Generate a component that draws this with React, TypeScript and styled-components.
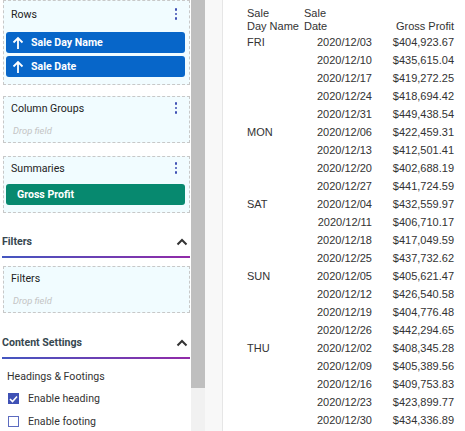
import styled, { createGlobalStyle } from "styled-components";

const GlobalStyle = createGlobalStyle`
  html, body {
    margin: 0;
    padding: 0;
    background: #ffffff;
  }
  * {
    box-sizing: border-box;
  }
`;

const Page = styled.div`
  display: flex;
  width: 465px;
  height: 431px;
  overflow: hidden;
`;

const Sidebar = styled.aside`
  width: 191px;
  flex-shrink: 0;
  overflow: hidden;
  background: #ffffff;
  font-family: Roboto, "Liberation Sans", sans-serif;
  font-size: 10.6px;
  color: #222;
`;

const SidebarInner = styled.div`
  padding: 0 1px 0 3px;
`;

const Scrollbar = styled.div`
  width: 14px;
  flex-shrink: 0;
  background: #f1f1f1;
`;

const Thumb = styled.div`
  height: 388px;
  background: #bfbfbf;
`;

const Gutter = styled.div`
  width: 18px;
  flex-shrink: 0;
  background: #f8f8f8;
  border-right: 1px solid #e6e6e6;
`;

const Report = styled.main`
  flex: 1;
  background: #ffffff;
  padding: 7px 0 0 24px;
  font-family: "Liberation Sans", Arial, sans-serif;
  font-size: 11px;
  color: #333;
`;

const Zone = styled.div<{ $gap?: number; $pb: number }>`
  background: #f1fcff;
  border: 1px dashed #c8c8c8;
  padding: 0 4px ${(p) => p.$pb}px 2px;
  margin-top: ${(p) => p.$gap ?? 0}px;
`;

const ZoneHead = styled.div<{ $h?: number }>`
  display: flex;
  align-items: center;
  justify-content: space-between;
  height: ${(p) => p.$h ?? 27}px;
  padding: 0 2px 5px 5px;
`;

const Kebab = styled.span`
  display: flex;
  flex-direction: column;
  gap: 2px;
  margin-right: 6px;
  i {
    width: 2.5px;
    height: 2.5px;
    border-radius: 50%;
    background: #3f51b5;
  }
`;

const DropField = styled.div`
  height: 14px;
  padding-left: 7px;
  font-size: 9.4px;
  font-style: italic;
  color: #c4c4c4;
  line-height: 14px;
`;

const Pills = styled.div`
  display: flex;
  flex-direction: column;
  gap: 3px;
`;

const Pill = styled.div<{ $tone: "blue" | "green" }>`
  display: flex;
  align-items: center;
  gap: 7px;
  height: 21px;
  border-radius: 3px;
  padding-left: ${(p) => (p.$tone === "green" ? 11 : 6)}px;
  background: ${(p) => (p.$tone === "green" ? "#07896f" : "#0766c9")};
  color: #ffffff;
  font-weight: 700;
`;

const SectionHead = styled.div<{ $top: number }>`
  display: flex;
  align-items: center;
  justify-content: space-between;
  margin: ${(p) => p.$top}px 0 0 -1px;
  padding: 0 2px 6px 0;
  line-height: 16px;
  font-weight: 700;
  color: #37474f;
  border-bottom: 2px solid;
  border-image: linear-gradient(90deg, #4356c0, #922aa8) 1;
`;

const Settings = styled.div`
  padding: 10px 0 0 4px;
  color: #333;
`;

const SettingsTitle = styled.div`
  line-height: 16px;
  margin-bottom: 2px;
`;

const CheckRow = styled.label`
  display: flex;
  align-items: center;
  gap: 9px;
  height: 23px;
  padding-left: 1px;
`;

const Box = styled.span<{ $on?: boolean }>`
  width: 11px;
  height: 11px;
  border: 1.5px solid ${(p) => (p.$on ? "#3f51b5" : "#5c6bc0")};
  background: ${(p) => (p.$on ? "#3f51b5" : "#ffffff")};
  display: flex;
  align-items: center;
  justify-content: center;
`;

const Table = styled.table`
  border-collapse: collapse;
  table-layout: fixed;
  width: 208px;
  th {
    font-weight: 400;
    text-align: left;
    vertical-align: bottom;
    line-height: 13px;
    padding: 0;
  }
  td {
    height: 18px;
    padding: 0;
    line-height: 18px;
    white-space: nowrap;
  }
`;

const Num = styled.td<{ $pad: number }>`
  text-align: right;
  padding-right: ${(p) => p.$pad}px !important;
`;

const HeadRight = styled.th`
  text-align: right !important;
  padding-right: 1px !important;
`;

const ArrowUp = () => (
  <svg width="12" height="14" viewBox="0 0 12 14" fill="none">
    <path d="M6 13V2M1.5 6.5L6 2l4.5 4.5" stroke="#fff" strokeWidth="1.8" />
  </svg>
);

const ChevronUp = () => (
  <svg width="12" height="8" viewBox="0 0 12 8" fill="none">
    <path d="M1.5 6.5L6 2l4.5 4.5" stroke="#333" strokeWidth="2" />
  </svg>
);

const Dots = () => (
  <Kebab>
    <i />
    <i />
    <i />
  </Kebab>
);

const data: [string, [string, string][]][] = [
  ["FRI", [
    ["2020/12/03", "$404,923.67"],
    ["2020/12/10", "$435,615.04"],
    ["2020/12/17", "$419,272.25"],
    ["2020/12/24", "$418,694.42"],
    ["2020/12/31", "$449,438.54"],
  ]],
  ["MON", [
    ["2020/12/06", "$422,459.31"],
    ["2020/12/13", "$412,501.41"],
    ["2020/12/20", "$402,688.19"],
    ["2020/12/27", "$441,724.59"],
  ]],
  ["SAT", [
    ["2020/12/04", "$432,559.97"],
    ["2020/12/11", "$406,710.17"],
    ["2020/12/18", "$417,049.59"],
    ["2020/12/25", "$437,732.62"],
  ]],
  ["SUN", [
    ["2020/12/05", "$405,621.47"],
    ["2020/12/12", "$426,540.58"],
    ["2020/12/19", "$404,776.48"],
    ["2020/12/26", "$442,294.65"],
  ]],
  ["THU", [
    ["2020/12/02", "$408,345.28"],
    ["2020/12/09", "$405,389.56"],
    ["2020/12/16", "$409,753.83"],
    ["2020/12/23", "$423,899.77"],
    ["2020/12/30", "$434,336.89"],
  ]],
];

export default function App() {
  return (
    <>
      <GlobalStyle />
      <Page>
        <Sidebar>
          <SidebarInner>
            <Zone $pb={7}>
              <ZoneHead $h={31}>
                Rows
                <Dots />
              </ZoneHead>
              <Pills>
                <Pill $tone="blue">
                  <ArrowUp />
                  Sale Day Name
                </Pill>
                <Pill $tone="blue">
                  <ArrowUp />
                  Sale Date
                </Pill>
              </Pills>
            </Zone>

            <Zone $gap={11} $pb={4}>
              <ZoneHead>
                Column Groups
                <Dots />
              </ZoneHead>
              <DropField>Drop field</DropField>
            </Zone>

            <Zone $gap={13} $pb={7}>
              <ZoneHead>
                Summaries
                <Dots />
              </ZoneHead>
              <Pills>
                <Pill $tone="green">Gross Profit</Pill>
              </Pills>
            </Zone>

            <SectionHead $top={21}>
              Filters
              <ChevronUp />
            </SectionHead>

            <Zone $gap={8} $pb={4}>
              <ZoneHead>Filters</ZoneHead>
              <DropField>Drop field</DropField>
            </Zone>

            <SectionHead $top={22}>
              Content Settings
              <ChevronUp />
            </SectionHead>

            <Settings>
              <SettingsTitle>Headings &amp; Footings</SettingsTitle>
              <CheckRow>
                <Box $on>
                  <svg width="9" height="8" viewBox="0 0 9 8" fill="none">
                    <path d="M1 4l2.5 2.5L8 1.5" stroke="#fff" strokeWidth="1.6" />
                  </svg>
                </Box>
                Enable heading
              </CheckRow>
              <CheckRow>
                <Box />
                Enable footing
              </CheckRow>
            </Settings>
          </SidebarInner>
        </Sidebar>

        <Scrollbar>
          <Thumb />
        </Scrollbar>
        <Gutter />

        <Report>
          <Table>
            <colgroup>
              <col style={{ width: 57 }} />
              <col style={{ width: 71 }} />
              <col style={{ width: 80 }} />
            </colgroup>
            <thead>
              <tr>
                <th>
                  Sale
                  <br />
                  Day Name
                </th>
                <th>
                  Sale
                  <br />
                  Date
                </th>
                <HeadRight>Gross Profit</HeadRight>
              </tr>
            </thead>
            <tbody>
              {data.map(([day, rows]) =>
                rows.map(([date, profit], i) => (
                  <tr key={day + date}>
                    <td>{i === 0 ? day : ""}</td>
                    <Num $pad={3}>{date}</Num>
                    <Num $pad={1}>{profit}</Num>
                  </tr>
                ))
              )}
            </tbody>
          </Table>
        </Report>
      </Page>
    </>
  );
}
